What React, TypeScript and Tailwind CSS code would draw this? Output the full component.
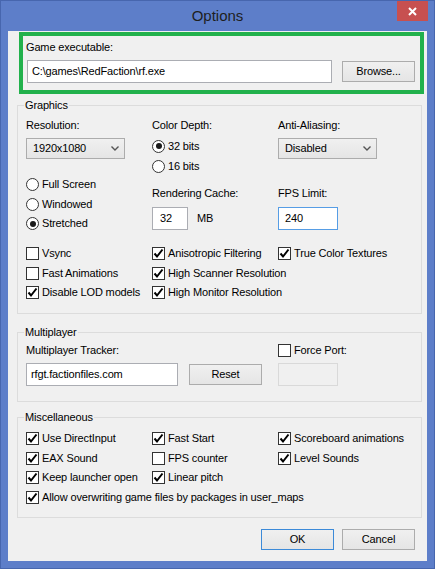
import React from "react";

const CheckMark = () => (
  <svg width="11" height="11" viewBox="0 0 11 11">
    <polyline points="1.5,5.5 4,8.5 9.5,1.5" fill="none" stroke="#000" strokeWidth="2" />
  </svg>
);

const Check = ({ label, checked = false }: { label: string; checked?: boolean }) => (
  <div className="flex items-center h-[19.5px] gap-[3px]">
    <span className="w-[13px] h-[13px] border border-[#333333] bg-white flex items-center justify-center shrink-0">
      {checked && <CheckMark />}
    </span>
    <span className="whitespace-nowrap">{label}</span>
  </div>
);

const Radio = ({ label, checked = false, h = "h-[19.5px]" }: { label: string; checked?: boolean; h?: string }) => (
  <div className={`flex items-center gap-[3px] ${h}`}>
    <span className="w-[13px] h-[13px] rounded-full border border-[#333333] bg-white flex items-center justify-center shrink-0">
      {checked && <span className="w-[6px] h-[6px] rounded-full bg-[#1a1a1a]" />}
    </span>
    <span className="whitespace-nowrap">{label}</span>
  </div>
);

const Button = ({ label, primary = false, className = "" }: { label: string; primary?: boolean; className?: string }) => (
  <div
    className={`w-[73px] h-[21px] flex items-center justify-center bg-gradient-to-b from-[#f0f0f0] to-[#e5e5e5] border ${
      primary ? "border-[#3c8ad8]" : "border-[#acacac]"
    } ${className}`}
  >
    {label}
  </div>
);

const Select = ({ value }: { value: string }) => (
  <div className="w-[99px] h-[21px] flex items-center justify-between pl-[6px] pr-[5px] bg-gradient-to-b from-[#f0f0f0] to-[#e5e5e5] border border-[#acacac]">
    <span>{value}</span>
    <svg width="8" height="5" viewBox="0 0 8 5">
      <polyline points="0.5,0.5 4,4 7.5,0.5" fill="none" stroke="#555" strokeWidth="1.4" />
    </svg>
  </div>
);

const Group = ({ title, className, children }: { title: string; className: string; children: React.ReactNode }) => (
  <div className={`relative ml-[9px] w-[405px] border border-[#dcdcdc] ${className}`}>
    <span className="absolute -top-[7px] left-[6px] px-[1px] bg-[#f0f0f0] leading-[13px]">{title}</span>
    {children}
  </div>
);

export default function App() {
  return (
    <div className="w-[435px] h-[569px] bg-[#5d7ec9] border border-[#4766ae] flex flex-col px-[7px] pb-[7px] font-['Liberation_Sans',Arial,sans-serif] text-[11px] leading-[13px] tracking-[-0.15px] text-black">
      <div className="relative h-[30px] -mx-[7px] flex items-center justify-center">
        <span className="text-[15px] text-[#1e1e1e] leading-[18px] tracking-normal -mt-[1px]">Options</span>
        <div className="absolute right-[6px] top-0 w-[31px] h-[20px] bg-[#c75050] flex items-center justify-center">
          <svg width="9" height="9" viewBox="0 0 9 9">
            <path d="M1 1 L8 8 M8 1 L1 8" stroke="#fff" strokeWidth="2" />
          </svg>
        </div>
      </div>

      <div className="flex-1 bg-[#f0f0f0] flex flex-col">
        <div className="mt-[1px] ml-[11px] w-[405px] h-[62px] border-4 border-[#22b14c] pl-[3px] pt-[5px]">
          <div>Game executable:</div>
          <div className="flex items-start mt-[6px]">
            <div className="w-[305px] h-[23px] ml-[1px] bg-white border border-[#abadb3] flex items-center pl-[4px]">
              C:\games\RedFaction\rf.exe
            </div>
            <Button label="Browse..." className="ml-[10px] mt-[1px]" />
          </div>
        </div>

        <Group title="Graphics" className="mt-[11px] h-[209px] pl-[8px] pt-[13px]">
          <div className="grid grid-cols-[126px_126px_126px]">
            <div className="flex flex-col">
              <div>Resolution:</div>
              <div className="mt-[6px]">
                <Select value="1920x1080" />
              </div>
              <div className="mt-[16px]">
                <Radio label="Full Screen" />
                <Radio label="Windowed" />
                <Radio label="Stretched" checked />
              </div>
            </div>
            <div className="flex flex-col">
              <div>Color Depth:</div>
              <div className="mt-[4px]">
                <Radio label="32 bits" checked h="h-[20px]" />
                <Radio label="16 bits" h="h-[20px]" />
              </div>
              <div className="mt-[11px]">Rendering Cache:</div>
              <div className="mt-[7px] flex items-center">
                <div className="w-[36px] h-[23px] bg-white border border-[#abadb3] flex items-center pl-[7px]">32</div>
                <span className="ml-[9px]">MB</span>
              </div>
            </div>
            <div className="flex flex-col">
              <div>Anti-Aliasing:</div>
              <div className="mt-[6px]">
                <Select value="Disabled" />
              </div>
              <div className="mt-[28px]">FPS Limit:</div>
              <div className="mt-[7px] w-[60px] h-[23px] bg-white border border-[#569de5] flex items-center pl-[6px]">240</div>
            </div>
          </div>
          <div className="grid grid-cols-[126px_126px_126px] mt-[10.5px]">
            <div>
              <Check label="Vsync" />
              <Check label="Fast Animations" />
              <Check label="Disable LOD models" checked />
            </div>
            <div>
              <Check label="Anisotropic Filtering" checked />
              <Check label="High Scanner Resolution" checked />
              <Check label="High Monitor Resolution" checked />
            </div>
            <div>
              <Check label="True Color Textures" checked />
            </div>
          </div>
        </Group>

        <Group title="Multiplayer" className="mt-[18px] h-[70px] pl-[8px] pt-[11px] flex">
          <div className="w-[252px]">
            <div>Multiplayer Tracker:</div>
            <div className="flex items-start mt-[6px]">
              <div className="w-[152px] h-[23px] bg-white border border-[#abadb3] flex items-center pl-[4px]">
                rfgt.factionfiles.com
              </div>
              <Button label="Reset" className="ml-[11px] mt-[1px]" />
            </div>
          </div>
          <div className="w-[126px]">
            <div className="h-[13px] flex items-center">
              <Check label="Force Port:" />
            </div>
            <div className="mt-[6px] w-[60px] h-[23px] bg-[#f0f0f0] border border-[#d9d9d9]" />
          </div>
        </Group>

        <Group title="Miscellaneous" className="mt-[15px] h-[101px] pl-[8px] pt-[11px]">
          <div className="grid grid-cols-[126px_126px_126px]">
            <Check label="Use DirectInput" checked />
            <Check label="Fast Start" checked />
            <Check label="Scoreboard animations" checked />
            <Check label="EAX Sound" checked />
            <Check label="FPS counter" />
            <Check label="Level Sounds" checked />
            <Check label="Keep launcher open" checked />
            <Check label="Linear pitch" checked />
            <div />
          </div>
          <Check label="Allow overwriting game files by packages in user_maps" checked />
        </Group>

        <div className="mt-[11px] flex justify-end gap-[8px] pr-[12px]">
          <Button label="OK" primary />
          <Button label="Cancel" />
        </div>
      </div>
    </div>
  );
}
